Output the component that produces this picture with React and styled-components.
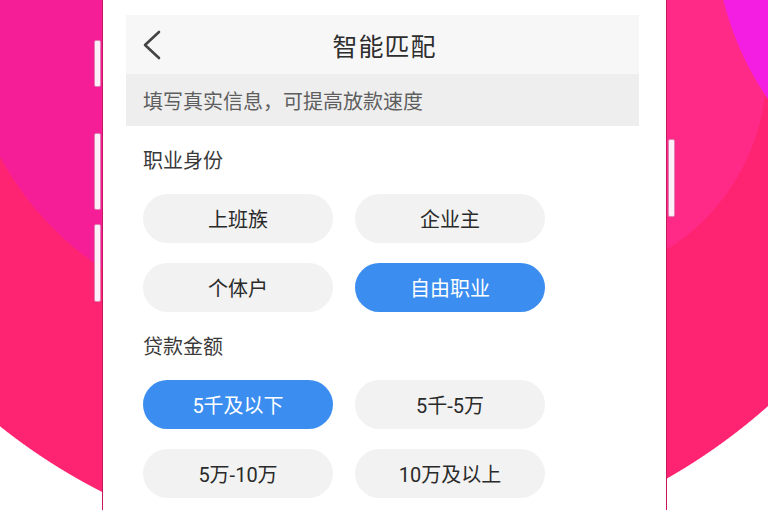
import React from "react";
import styled, { createGlobalStyle } from "styled-components";

const GlobalStyle = createGlobalStyle`
  html, body {
    margin: 0;
    padding: 0;
    background: #fff;
  }
  body {
    font-family: Roboto, "Noto Sans CJK SC", sans-serif;
  }
`;

const jobs = [
  { label: "上班族" },
  { label: "企业主" },
  { label: "个体户" },
  { label: "自由职业", active: true },
];

const amounts = [
  { label: "5千及以下", active: true },
  { label: "5千-5万" },
  { label: "5万-10万" },
  { label: "10万及以上" },
];

function BackIcon() {
  return (
    <svg width="20" height="30" viewBox="0 0 20 30">
      <path
        d="M17 2 L3 15 L17 28"
        fill="none"
        stroke="#444"
        strokeWidth="2.6"
        strokeLinecap="round"
        strokeLinejoin="round"
      />
    </svg>
  );
}

function App() {
  return (
    <>
      <GlobalStyle />
      <Stage>
        <Phone>
          <SideKey $side="left" $top={40} $height={47} />
          <SideKey $side="left" $top={133} $height={77} />
          <SideKey $side="left" $top={224} $height={78} />
          <SideKey $side="right" $top={139} $height={78} />
          <Screen>
            <Header>
              <BackButton>
                <BackIcon />
              </BackButton>
              <Title>智能匹配</Title>
            </Header>
            <Notice>填写真实信息，可提高放款速度</Notice>
            <Form>
              <Label>职业身份</Label>
              <Options>
                {jobs.map((o) => (
                  <Option key={o.label} $active={o.active}>
                    {o.label}
                  </Option>
                ))}
              </Options>
              <Label>贷款金额</Label>
              <Options>
                {amounts.map((o) => (
                  <Option key={o.label} $active={o.active}>
                    {o.label}
                  </Option>
                ))}
              </Options>
            </Form>
          </Screen>
        </Phone>
      </Stage>
    </>
  );
}

const Stage = styled.div`
  width: 768px;
  height: 510px;
  overflow: hidden;
  display: flex;
  justify-content: center;
  background:
    radial-gradient(circle 304px at 1018px -73px, #f41ee2 303px, transparent 304px),
    radial-gradient(circle 212px at 555px 70px, #ff2a88 211px, transparent 212px),
    radial-gradient(circle 309px at 272px 11px, #f61e96 308px, transparent 309px),
    radial-gradient(circle 597px at 372px -40px, #ff2471 596px, transparent 597px),
    #ffffff;
`;

const Phone = styled.div`
  position: relative;
  width: 565px;
  height: 510px;
  box-sizing: border-box;
  background: #fff;
  border-left: 1px solid #c9175f;
  border-right: 1px solid #c9175f;
  padding: 15px 0 0 23px;
  flex-shrink: 0;
  margin-left: 1px;
`;

const SideKey = styled.div`
  position: absolute;
  top: ${(p) => p.$top}px;
  height: ${(p) => p.$height}px;
  width: 7px;
  ${(p) => (p.$side === "left" ? "left: -9px;" : "right: -9px;")}
  background: #fdf0f8;
  border: 1px solid #e27fb4;
  border-radius: 2px;
  box-sizing: border-box;
`;

const Screen = styled.div`
  width: 513px;
  display: flex;
  flex-direction: column;
`;

const Header = styled.div`
  position: relative;
  height: 59px;
  background: #f7f7f7;
  display: flex;
  align-items: center;
  justify-content: center;
`;

const BackButton = styled.div`
  position: absolute;
  left: 16px;
  top: 15px;
  display: flex;
`;

const Title = styled.div`
  font-size: 25px;
  color: #2e2e2e;
  letter-spacing: 1px;
  margin-left: 4px;
`;

const Notice = styled.div`
  height: 52px;
  background: #eeeeee;
  display: flex;
  align-items: center;
  padding-left: 17px;
  font-size: 20px;
  color: #5e5e5e;
`;

const Form = styled.div`
  padding-left: 17px;
  display: flex;
  flex-direction: column;
`;

const Label = styled.div`
  font-size: 20px;
  line-height: 28px;
  color: #3a3a3a;
  margin: 21px 0 19px;
`;

const Options = styled.div`
  display: grid;
  grid-template-columns: 190px 190px;
  column-gap: 22px;
  row-gap: 20px;
`;

const Option = styled.div`
  height: 49px;
  border-radius: 25px;
  display: flex;
  align-items: center;
  justify-content: center;
  font-size: 20px;
  background: ${(p) => (p.$active ? "#3b8ef0" : "#f2f2f2")};
  color: ${(p) => (p.$active ? "#ffffff" : "#2a2a2a")};
`;

export default App;
